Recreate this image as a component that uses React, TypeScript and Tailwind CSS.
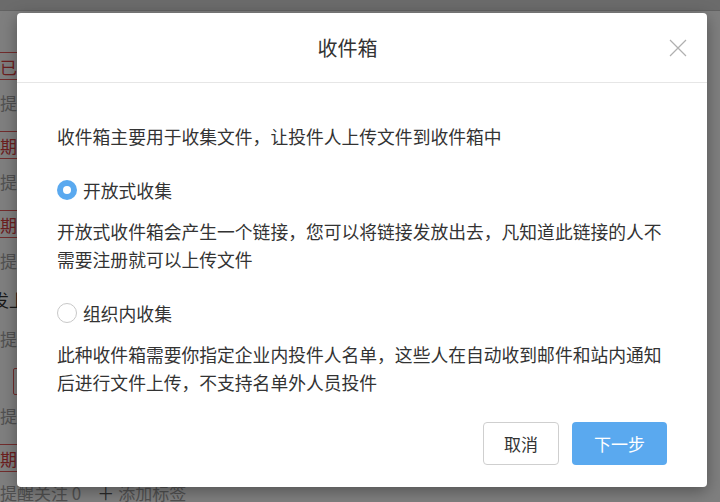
const font = { fontFamily: '"Noto Sans CJK SC", "Noto Sans", sans-serif' };

function Tag({ text }: { text: string }) {
  return (
    <div className="h-[28px] w-[60px] border border-[#e25a5a] rounded-[2px] -ml-[9px] pl-[4px] flex items-center text-[17px] text-[#d8403f] leading-none whitespace-nowrap">
      {text}
    </div>
  );
}

function Hint({ text, className = "" }: { text: string; className?: string }) {
  return <div className={`text-[17px] leading-[28px] text-[#a3a3a3] whitespace-nowrap ${className}`}>{text}</div>;
}

function Radio({ checked, label }: { checked: boolean; label: string }) {
  return (
    <div className="flex items-center gap-[6px] h-[28px]">
      {checked ? (
        <span className="w-[20px] h-[20px] rounded-full bg-[#5aa9ef] flex items-center justify-center">
          <span className="w-[8px] h-[8px] rounded-full bg-white" />
        </span>
      ) : (
        <span className="w-[20px] h-[20px] rounded-full border border-[#c8c8c8] bg-white" />
      )}
      <span>{label}</span>
    </div>
  );
}

export default function App() {
  return (
    <div className="relative w-[720px] h-[502px] overflow-hidden bg-white" style={font}>
      {/* page behind the dialog */}
      <div className="h-[11px] bg-[#d6d6d6] border-b border-[#c4c4c4]" />
      <div className="flex flex-col pl-[4px] pt-[41px]">
        <Tag text="已安排" />
        <Hint text="提醒" className="mt-[9px] -ml-[4px]" />
        <div className="mt-[14px]"><Tag text="期限" /></div>
        <Hint text="提醒" className="mt-[9px] -ml-[4px]" />
        <div className="mt-[14px]"><Tag text="期限" /></div>
        <Hint text="提醒" className="mt-[9px] -ml-[4px]" />
        <div className="mt-[11px] -ml-[12px] text-[17px] leading-[28px] text-[#333]">发上传</div>
        <Hint text="提醒" className="mt-[11px] -ml-[4px]" />
        <div className="mt-[15px] ml-[9px] h-[27px] w-[80px] border border-[#e25a5a] rounded-[2px]" />
        <Hint text="提醒" className="mt-[7px] -ml-[4px]" />
        <div className="mt-[14px]"><Tag text="期限" /></div>
        <div className="mt-[7px] -ml-[4px] flex items-center text-[17px] leading-[28px] text-[#a3a3a3] whitespace-nowrap">
          <span>提醒关注 0</span>
          <span className="ml-[16px] text-[#555]">＋</span>
          <span className="ml-[4px]">添加标签</span>
        </div>
      </div>

      {/* overlay */}
      <div className="absolute inset-0 bg-black/50" />

      {/* dialog */}
      <div className="absolute left-[17px] top-[13px] w-[690px] h-[474px] bg-white rounded-[4px] shadow-[0_4px_16px_rgba(0,0,0,0.35)] flex flex-col text-[#333]">
        <div className="h-[70px] shrink-0 flex items-center justify-center pr-[29px] border-b border-[#e6e6e6] relative">
          <span className="text-[20px]">收件箱</span>
          <button className="absolute right-[20px] top-[26px]">
            <svg width="18" height="18" viewBox="0 0 18 18" fill="none" stroke="#b0b0b0" strokeWidth="1.2">
              <path d="M1 1L17 17M17 1L1 17" />
            </svg>
          </button>
        </div>
        <div className="flex-1 flex flex-col px-[40px] pt-[39px] text-[17.8px] leading-[28px]">
          <p>收件箱主要用于收集文件，让投件人上传文件到收件箱中</p>
          <div className="mt-[26px]">
            <Radio checked label="开放式收集" />
          </div>
          <p className="mt-[13px]">开放式收件箱会产生一个链接，您可以将链接发放出去，凡知道此链接的人不需要注册就可以上传文件</p>
          <div className="mt-[26px]">
            <Radio checked={false} label="组织内收集" />
          </div>
          <p className="mt-[13px]">此种收件箱需要你指定企业内投件人名单，这些人在自动收到邮件和站内通知后进行文件上传，不支持名单外人员投件</p>
          <div className="mt-[26px] flex justify-end gap-[13px]">
            <button className="w-[76px] h-[43px] border border-[#cfcfcf] rounded-[4px] bg-white text-[17px] text-[#333]">取消</button>
            <button className="w-[95px] h-[43px] rounded-[4px] bg-[#5aa9ef] text-[17px] text-white">下一步</button>
          </div>
        </div>
      </div>
    </div>
  );
}
